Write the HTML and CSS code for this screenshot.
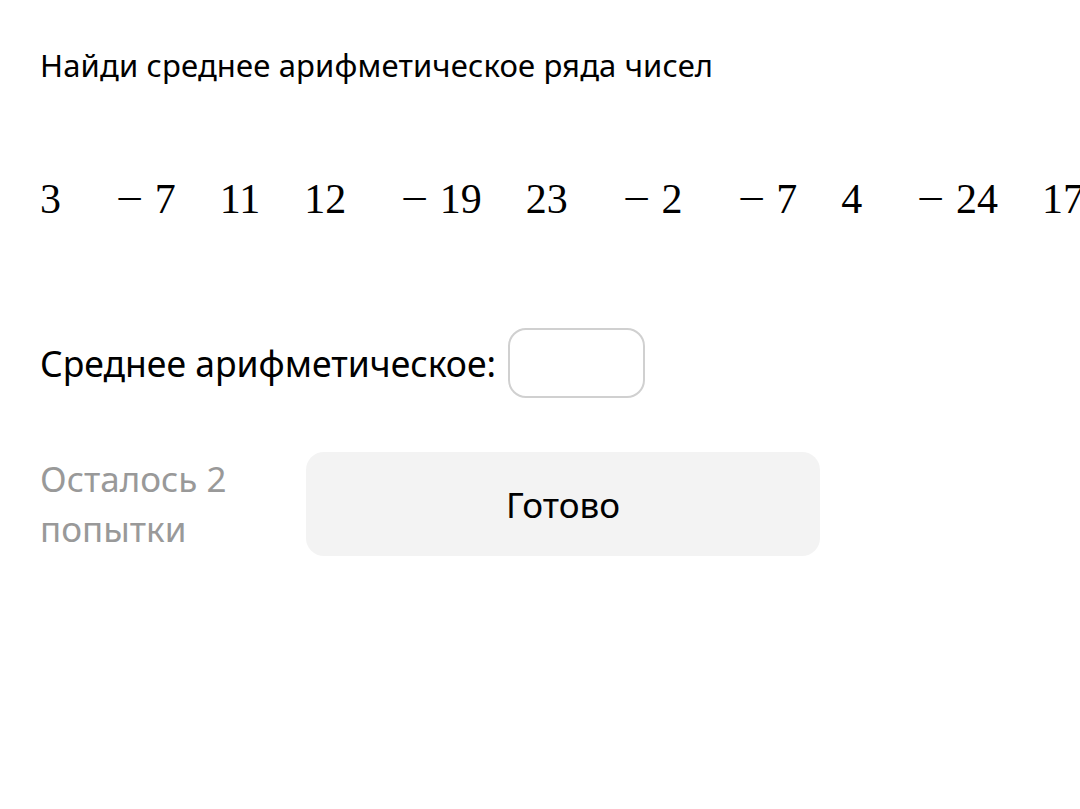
FILE: index.html
```html
<!DOCTYPE html>
<html lang="ru">
<head>
    <meta charset="UTF-8">
    <meta name="viewport" content="width=device-width, initial-scale=1.0">
    <title>Среднее арифметическое</title>
    <link rel="stylesheet" href="styles.css">
</head>
<body>
    <div class="task">
        <p class="task-title">Найди среднее арифметическое ряда чисел</p>

        <div class="numbers">
            <span class="num">3</span>
            <span class="num neg"><span class="minus">−</span>7</span>
            <span class="num">11</span>
            <span class="num">12</span>
            <span class="num neg"><span class="minus">−</span>19</span>
            <span class="num">23</span>
            <span class="num neg"><span class="minus">−</span>2</span>
            <span class="num neg"><span class="minus">−</span>7</span>
            <span class="num">4</span>
            <span class="num neg"><span class="minus">−</span>24</span>
            <span class="num">17</span>
        </div>

        <div class="answer-row">
            <label class="answer-label" for="answer">Среднее арифметическое:</label>
            <input class="answer-input" id="answer" type="text">
        </div>

        <div class="footer">
            <div class="attempts">Осталось 2<br>попытки</div>
            <button class="btn-done">Готово</button>
        </div>
    </div>
</body>
</html>
```

FILE: styles.css
```css
body {
    margin: 0;
    padding: 0 40px;
    background: #fff;
    color: #000;
    font-family: "Noto Sans", "Open Sans", sans-serif;
    overflow: hidden;
}
.task-title {
    margin: 42px 0 0;
    font-size: 31px;
    letter-spacing: 0.15px;
    line-height: 46px;
}
.numbers {
    display: flex;
    gap: 44px;
    margin-top: 86px;
    white-space: nowrap;
    font-family: "Liberation Serif", "DejaVu Serif", serif;
    font-size: 42px;
    line-height: 50px;
}
.num.neg {
    margin-left: 11px;
}
.minus {
    display: inline-block;
    margin-right: 15px;
    transform: scaleX(1.15);
    transform-origin: left center;
}
.answer-row {
    display: flex;
    align-items: center;
    gap: 12px;
    margin-top: 104px;
}
.answer-label {
    font-size: 35.5px;
}
.answer-input {
    width: 137px;
    height: 70px;
    box-sizing: border-box;
    border: 2px solid #d0d0d0;
    border-radius: 18px;
    background: #fff;
    outline: none;
}
.footer {
    display: flex;
    align-items: center;
    gap: 80px;
    margin-top: 54px;
}
.attempts {
    width: 186px;
    color: #999;
    font-size: 35px;
    line-height: 50px;
    white-space: nowrap;
}
.btn-done {
    width: 514px;
    height: 104px;
    border: none;
    border-radius: 18px;
    background: #f3f3f3;
    color: #000;
    font-family: inherit;
    font-size: 35px;
}
```
